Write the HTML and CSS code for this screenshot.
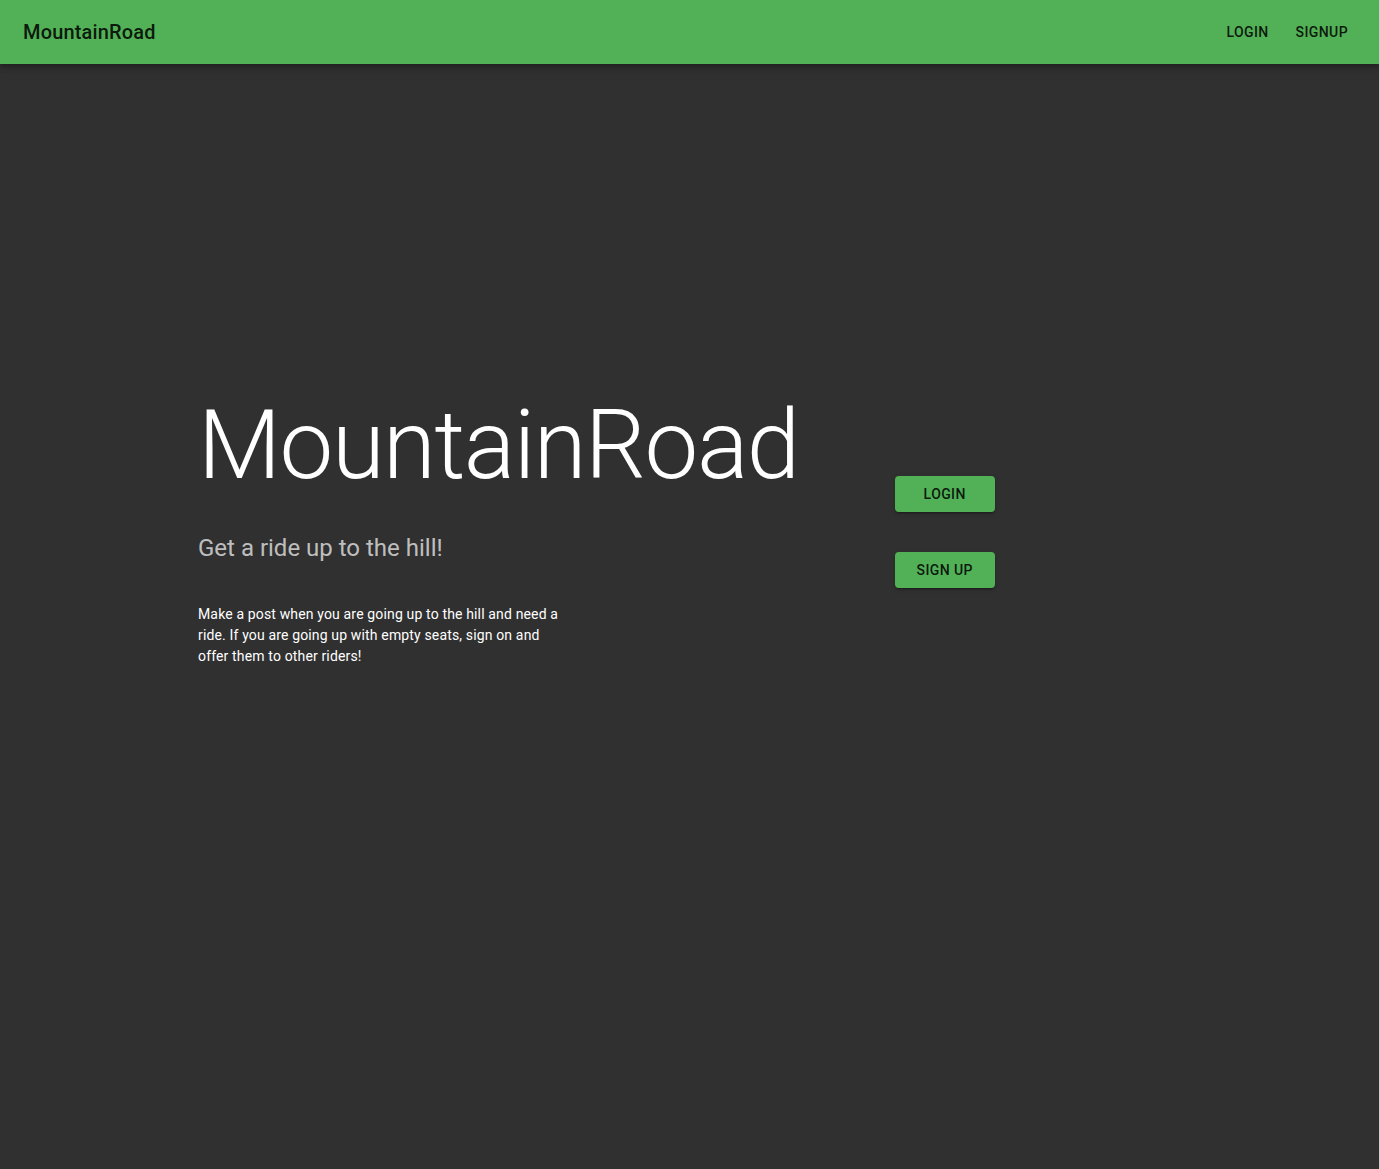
FILE: index.html
```html
<!DOCTYPE html>
<html lang="en">
<head>
<meta charset="utf-8">
<meta name="viewport" content="width=device-width, initial-scale=1">
<title>MountainRoad</title>
<link rel="stylesheet" href="styles.css">
</head>
<body>
<header class="app-bar">
  <a class="brand" href="#">MountainRoad</a>
  <nav class="nav">
    <button class="button" type="button">Login</button>
    <button class="button" type="button">Signup</button>
  </nav>
</header>
<main class="hero">
  <section class="intro">
    <h1 class="title">MountainRoad</h1>
    <h2 class="tagline">Get a ride up to the hill!</h2>
    <p class="description">Make a post when you are going up to the hill and need a ride. If you are going up with empty seats, sign on and offer them to other riders!</p>
  </section>
  <div class="actions">
    <button class="button button-contained" type="button">Login</button>
    <button class="button button-contained" type="button">Sign up</button>
  </div>
</main>
</body>
</html>
```
FILE: styles.css
```css
* {
  box-sizing: border-box;
}

body {
  display: flex;
  flex-direction: column;
  min-height: 100vh;
  margin: 0;
  border-right: 1px solid #d0d0d0;
  background: #303030;
  color: #fff;
  font-family: Roboto, "Liberation Sans", sans-serif;
}

.app-bar {
  display: flex;
  align-items: center;
  justify-content: space-between;
  min-height: 64px;
  padding: 0 23px;
  background: #52b056;
  box-shadow: 0 2px 4px -1px rgba(0, 0, 0, 0.2), 0 4px 5px rgba(0, 0, 0, 0.14), 0 1px 10px rgba(0, 0, 0, 0.12);
}

.brand {
  color: rgba(0, 0, 0, 0.87);
  font-size: 20px;
  font-weight: 500;
  line-height: 32px;
  letter-spacing: 0.0075em;
  text-decoration: none;
}

.nav {
  display: flex;
  gap: 11px;
}

.button {
  min-width: 58px;
  padding: 6px 8px;
  border: 0;
  border-radius: 4px;
  background: transparent;
  color: rgba(0, 0, 0, 0.87);
  font-family: inherit;
  font-size: 14px;
  font-weight: 500;
  line-height: 24px;
  letter-spacing: 0.02857em;
  text-transform: uppercase;
  cursor: pointer;
}

.button-contained {
  width: 100px;
  background: #52b056;
  box-shadow: 0 3px 1px -2px rgba(0, 0, 0, 0.2), 0 2px 2px rgba(0, 0, 0, 0.14), 0 1px 5px rgba(0, 0, 0, 0.12);
}

.hero {
  display: flex;
  flex: 1;
  flex-wrap: wrap;
  align-items: center;
  align-content: center;
  gap: 40px 96px;
  width: 100%;
  max-width: 1031px;
  margin: 0 auto;
  padding: 24px 24px 194px;
}

.intro {
  padding-bottom: 8px;
}

.title {
  margin: 0;
  font-size: 96px;
  font-weight: 300;
  line-height: 114px;
  letter-spacing: -0.01562em;
}

.tagline {
  margin: 30px 0 40px;
  color: rgba(255, 255, 255, 0.7);
  font-size: 24px;
  font-weight: 400;
  line-height: 32px;
}

.description {
  max-width: 368px;
  margin: 0;
  font-size: 14px;
  line-height: 21px;
  letter-spacing: 0.01071em;
}

.actions {
  display: flex;
  flex-direction: column;
  gap: 40px;
}
```
